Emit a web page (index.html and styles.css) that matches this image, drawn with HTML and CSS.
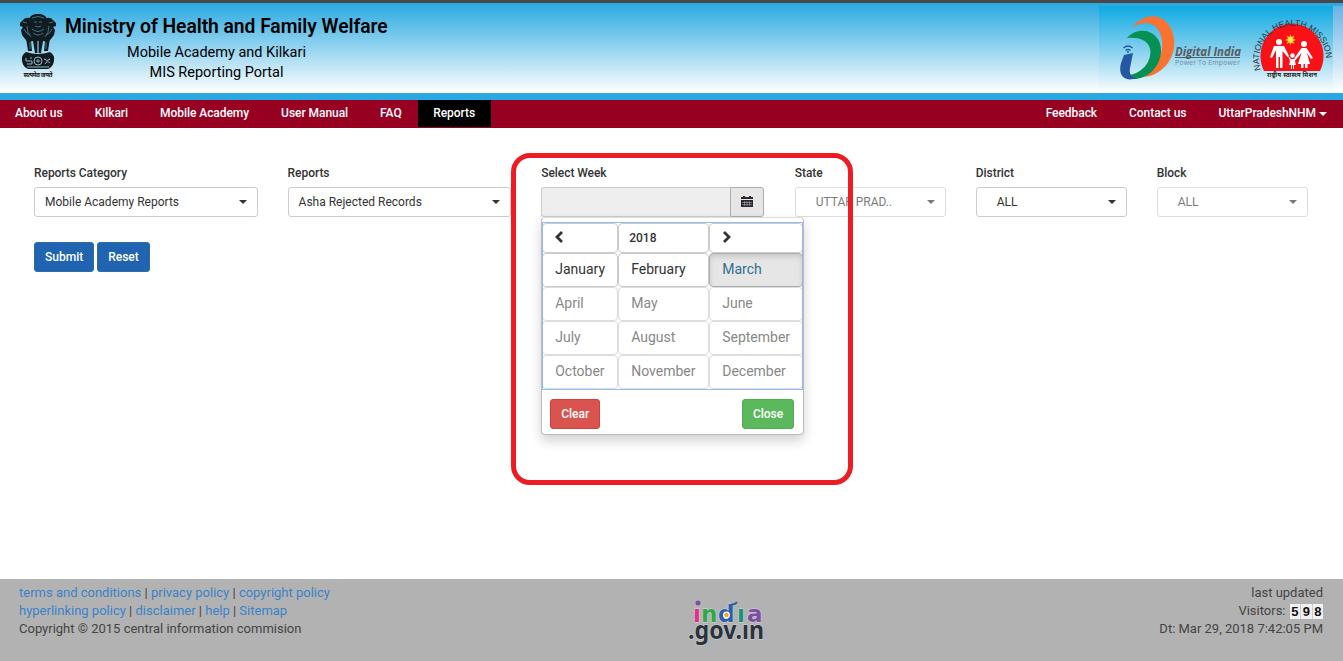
FILE: index.html
```html
<!DOCTYPE html>
<html lang="en">
<head>
<meta charset="utf-8">
<title>MIS Reporting Portal</title>
<link rel="stylesheet" href="styles.css">
</head>
<body>
<header class="header">
  <svg class="emblem" viewBox="0 0 40 66" width="40" height="66">
    <g fill="#101c20">
      <path d="M12 4Q15 .5 20 1Q25 .5 28 4L29 8L27 18L25 26H15L12 18L11 8Z"/>
      <path d="M12 5Q7 4 5 7L2 10L2 13L5 14L3 17L4 22L7 26L10 29L15 28V12Z"/>
      <path d="M28 5Q33 4 35 7L38 10L38 13L35 14L37 17L36 22L33 26L30 29L25 28V12Z"/>
      <path d="M8 25L10 38H14L13 28H15L17 40H19.4V28H20.6V40H23L25 28H27L26 38H30L32 25Z"/>
      <path d="M8 39Q20 43 32 39Q37 42 36 48Q35 54 30 56H10Q5 54 4 48Q3 42 8 39Z"/>
    </g>
    <g fill="none" stroke="#4d88a0" stroke-width=".8">
      <path d="M14 5q6 -3 12 0M16 9h3M21 9h3M17 13q3 2 6 0M14 16q6 5 12 0M15 20q5 4 10 0M5 9l4 1M35 9l-4 1M6 16q2 5 6 6M34 16q-2 5 -6 6M9 13q0 7 4 11M31 13q0 7 -4 11M12 29v7M28 29v7"/>
    </g>
    <g fill="none" stroke="#91b6c5" stroke-width="1">
      <circle cx="20" cy="48" r="4"/><circle cx="20" cy="48" r="1.200"/>
      <path d="M8 45v3h6v3H9M12 45h2M26 46q3 3 6 0M27 51q2-4 5-1M9 54h22"/>
    </g>
    <text x="20" y="64" class="emblem-motto" textLength="29">सत्यमेव जयते</text>
  </svg>
  <div class="titles">
    <h1 class="title">Ministry of Health and Family Welfare</h1>
    <p class="subtitle">Mobile Academy and Kilkari</p>
    <p class="subtitle">MIS Reporting Portal</p>
  </div>
  <svg class="partners" viewBox="0 0 244 87" width="244" height="87">
    <defs>
      <linearGradient id="sky" x2="0" y2="1"><stop stop-color="#0eaae2"/><stop offset=".5" stop-color="#83d0ee"/><stop offset="1" stop-color="#fdfeff"/></linearGradient>
      <linearGradient id="side" x2="0" y2="1"><stop stop-color="#6ab2e5"/><stop offset="1" stop-color="#fff"/></linearGradient>
      <path id="arc" d="M161.800 64A33.500 33.500 0 1 1 225.200 64"/>
    </defs>
    <rect width="244" height="87" fill="url(#side)"/>
    <rect width="234" height="87" fill="url(#sky)"/>
    <path d="M33 22C46 5 66 7 73 25C82 49 63 70 45 71C61 61 68 40 60 25C54 15 44 15 33 22Z" fill="#fb7132"/>
    <path d="M28 32C37 22 53 22 60 35C68 53 52 74 34 73C29 73 26 71 24 67C32 72 44 65 49 56C55 44 51 30 28 32Z" fill="#079054"/>
    <path d="M25 49L34 47L31 62C30 68 32 71 38 72C24 77 19 68 22 57Z" fill="#2458a4"/>
    <g fill="none" stroke="#2458a4" stroke-width="1.300"><path d="M24.500 42q4.500-4 9 0M26.500 44.500q2.500-2 5 0"/></g>
    <circle cx="29" cy="46" r="1" fill="#2458a4"/>
    <text x="76" y="50" class="digital" textLength="66">Digital India</text>
    <path d="M76 51.500H141" stroke="#555b60" stroke-width="1"/>
    <text x="76" y="58.500" class="power" textLength="65">Power To Empower</text>
    <path d="M165 65A31.500 32.500 0 1 1 221 65Z" fill="#fa1017"/>
    <text class="mission"><textPath href="#arc">NATIONAL HEALTH MISSION</textPath></text>
    <path d="M191.500 28l1 3 3-1.500-1.500 3 3 1.500-3 1 1.500 3-3-1.500-1 3-1-3-3 1.500 1.500-3-3-1 3-1.500-1.500-3 3 1.500Z" fill="#ffc428"/>
    <circle cx="191.500" cy="34" r="2.700" fill="#ffe943"/>
    <g fill="#fff" transform="translate(-1 0)">
      <circle cx="181" cy="36" r="3"/><circle cx="206" cy="38" r="3"/><circle cx="194.500" cy="49.500" r="2.300"/>
      <path d="M176 40H186L191 50L189.500 51L184.500 45V62H182V51H180.500V62H178V44L174 52L172 51Z"/>
      <path d="M203.500 42H208.500L215 52L213 53L209 47L212 58H209.500V62H207V58H205.500V62H203V58H200L203.500 47L197.500 54L196.500 52Z"/>
      <path d="M189.500 49L193 53H196L199 50L197 55L198 59H196V63H195V59H194V63H193V59H191L192 55Z"/>
    </g>
    <text x="193" y="71" class="hindi" textLength="50">राष्ट्रीय स्वास्थ्य मिशन</text>
  </svg>
</header>

<nav class="nav">
  <a class="nav-item">About us</a><a class="nav-item">Kilkari</a><a class="nav-item">Mobile Academy</a><a class="nav-item">User Manual</a><a class="nav-item">FAQ</a><a class="nav-item active">Reports</a>
  <span class="spacer"></span>
  <a class="nav-item">Feedback</a><a class="nav-item">Contact us</a><a class="nav-item user">UttarPradeshNHM<i class="caret"></i></a>
</nav>

<main class="main">
  <div class="filters">
    <div class="field"><label class="label">Reports Category</label><div class="select">Mobile Academy Reports<i class="caret"></i></div></div>
    <div class="field"><label class="label">Reports</label><div class="select">Asha Rejected Records<i class="caret"></i></div></div>
    <div class="field week">
      <label class="label">Select Week</label>
      <div class="date"><span class="date-input"></span><span class="date-button">
        <svg width="12" height="12" viewBox="0 0 12 12"><path d="M0 1h2V0h2v1h4V0h2v1h2v2H0ZM0 4h12v7H0Z" fill="#2b2530"/><path d="M1 6.500h10M1 8.700h10M3.500 5v5M6 5v5M8.500 5v5" stroke="#e6e6e6" stroke-width=".4"/></svg>
      </span></div>
      <div class="popup">
        <div class="months">
          <span class="cell head"><svg width="10" height="12" viewBox="0 0 10 12"><path d="M8 1L3 6L8 11" fill="none" stroke="#333" stroke-width="2.800"/></svg></span>
          <span class="cell head year">2018</span>
          <span class="cell head"><svg width="10" height="12" viewBox="0 0 10 12"><path d="M3 1L8 6L3 11" fill="none" stroke="#333" stroke-width="2.800"/></svg></span>
          <span class="cell">January</span><span class="cell">February</span><span class="cell current">March</span>
          <span class="cell off">April</span><span class="cell off">May</span><span class="cell off">June</span>
          <span class="cell off">July</span><span class="cell off">August</span><span class="cell off">September</span>
          <span class="cell off">October</span><span class="cell off">November</span><span class="cell off">December</span>
        </div>
        <div class="popup-actions"><button class="btn danger">Clear</button><button class="btn success">Close</button></div>
      </div>
    </div>
    <div class="field"><label class="label">State</label><div class="select indent disabled">UTTAR PRAD..<i class="caret"></i></div></div>
    <div class="field"><label class="label">District</label><div class="select indent">ALL<i class="caret"></i></div></div>
    <div class="field"><label class="label">Block</label><div class="select indent disabled">ALL<i class="caret"></i></div></div>
  </div>
  <div class="actions"><button class="btn primary">Submit</button><button class="btn primary">Reset</button></div>
</main>
<div class="highlight"></div>

<footer class="footer">
  <div class="footer-links">
    <div><a>terms and conditions</a> | <a>privacy policy</a> | <a>copyright policy</a></div>
    <div><a>hyperlinking policy</a> | <a>disclaimer</a> | <a>help</a> | <a>Sitemap</a></div>
    <div>Copyright © 2015 central information commision</div>
  </div>
  <svg class="india" viewBox="0 0 80 50" width="80" height="50">
    <text y="22.500" class="india-word"><tspan x="7" fill="#e0308c">ı</tspan><tspan x="15" fill="#2fa84a">n</tspan><tspan x="32" fill="#2b5fae">d</tspan><tspan x="51" fill="#16937a">ı</tspan><tspan x="61" fill="#7d4fa2">a</tspan></text>
    <text x="2" y="40" class="gov-word" textLength="76" lengthAdjust="spacingAndGlyphs">.gov.ın</text>
    <circle cx="12" cy="4" r="2.500" fill="#7d4fa2"/>
    <path d="M45 5.500Q49 6 51 3" fill="none" stroke="#2b5fae" stroke-width="2"/>
    <circle cx="40.500" cy="16" r="3.400" fill="#fff"/><circle cx="40.500" cy="16" r="2.200" fill="#f9a21b"/>
  </svg>
  <div class="footer-info">
    <div>last updated</div>
    <div class="visitors">Visitors: <span class="digits"><b>5</b><b>9</b><b>8</b></span></div>
    <div>Dt: Mar 29, 2018 7:42:05 PM</div>
  </div>
</footer>
</body>
</html>
```
FILE: styles.css
```css
* { box-sizing: border-box; }
body { margin: 0; height: 661px; display: flex; flex-direction: column; overflow: hidden; position: relative; background: #fff; color: #333; font: 12px/18px Roboto, sans-serif; }
.header { height: 100px; flex: none; display: flex; border-top: 3px solid #484848; border-bottom: 7px solid #29a9e1; background: linear-gradient(#29a9e1, #fff); }
.emblem { margin: 10px 0 0 18px; }
.emblem-motto { font: bold 6px "Noto Sans Devanagari", "Noto Sans", sans-serif; text-anchor: middle; fill: #111; }
.titles { margin: 12px 0 0 7px; width: 323px; color: #000; }
.title { margin: 0; font-size: 19.3px; font-weight: 600; line-height: 24px; letter-spacing: -.05px; white-space: nowrap; }
.subtitle { margin: 0 20px 0 0; font-size: 14.5px; line-height: 20px; text-align: center; }
.title + .subtitle { margin-top: 4px; }
.partners { margin: 3px 0 0 auto; }
.digital { font: italic bold 11.5px "Open Sans", sans-serif; fill: #555b60; }
.power { font: 7px "Open Sans", sans-serif; fill: #7c8c96; }
.mission { font: 8.6px "Liberation Sans", sans-serif; letter-spacing: -.05px; fill: #26343b; }
.hindi { font: bold 6px "Noto Sans Devanagari", "Noto Sans", sans-serif; text-anchor: middle; fill: #222; }
.nav { height: 28px; flex: none; display: flex; background: #980022; color: #fff; }
.nav-item { padding: 0 16px; line-height: 26px; font-weight: 500; letter-spacing: -.05px; white-space: nowrap; }
.nav-item:first-child { padding-left: 15px; }
.nav-item.active { background: #000; padding: 0 15.5px; height: 27px; }
.spacer { flex: 1; }
.caret { display: inline-block; border: 4px solid transparent; border-top-color: currentColor; border-bottom: 0; }
.user .caret { margin-left: 3px; vertical-align: middle; }
.main { flex: 1; padding: 36px 34px 0; }
.filters { display: grid; grid-template-columns: repeat(3, 223.6px) repeat(3, 151px); gap: 30px; }
.label { display: block; height: 23px; font-weight: 500; letter-spacing: -.05px; }
.select { height: 30px; border: 1px solid #ccc; border-radius: 3px; padding: 0 10px; display: flex; align-items: center; justify-content: space-between; white-space: nowrap; }
.select.indent { padding-left: 20px; }
.select.disabled { opacity: .65; }
.week { position: relative; }
.date { display: flex; height: 30px; }
.date-input { width: 189px; background: #eee; border: 1px solid #ccc; border-right: 0; border-radius: 3px 0 0 3px; }
.date-button { width: 34px; display: flex; align-items: center; justify-content: center; background: #e6e6e6; border: 1px solid #adadad; border-radius: 0 3px 3px 0; }
.popup { position: absolute; top: 53px; left: 0; width: 263px; height: 218px; padding-top: 4px; background: #fff; border: 1px solid #bbb; border-top-color: #ddd; border-radius: 4px; box-shadow: 0 6px 12px rgba(0, 0, 0, .175); z-index: 1; }
.months { display: grid; grid-template-columns: 76px 91px 94px; grid-template-rows: 30px repeat(4, 34px); padding-top: 1px; outline: 1px solid #94b9f6; outline-offset: -1px; border-bottom: 1px solid #94b9f6; }
.cell { border: 1px solid #ccc; border-radius: 4px; padding: 0 12px; font-size: 14px; line-height: 31px; }
.cell.head { padding: 0 11px; font-size: 12px; line-height: 29px; }
.cell.head svg { vertical-align: middle; margin-top: -3px; }
.cell.year { padding-left: 10px; font-weight: 500; }
.cell.off { border-color: #ddd; color: #888; }
.cell.current { background: #e6e6e6; border-color: #adadad; color: #31708f; box-shadow: inset 0 3px 5px rgba(0, 0, 0, .125); }
.popup-actions { display: flex; justify-content: space-between; padding: 9px 9px 0 8px; }
.btn { height: 30px; padding: 0 10px; border: 1px solid; border-radius: 3px; color: #fff; font: 500 12px/18px Roboto, sans-serif; }
.primary { background: #2063b0; border-color: #2e6da4; }
.danger { background: #d9534f; border-color: #d43f3a; }
.success { background: #5cb85c; border-color: #4cae4c; }
.actions { display: flex; gap: 3px; margin-top: 25px; }
.highlight { position: absolute; left: 511px; top: 153px; width: 342px; height: 332px; border: 5px solid #ed1c24; border-radius: 19px; z-index: 2; }
.footer { height: 82px; flex: none; display: flex; background: #b2b2b2; padding: 5px 20px 0 19px; font-size: 13px; color: #444; }
.footer-links { width: 667px; }
.footer a { color: #3a83ca; }
.india { margin-top: 15px; }
.india-word { font: bold 23px "DejaVu Sans", sans-serif; stroke: #d5d5d5; stroke-width: 1px; paint-order: stroke; }
.gov-word { font: bold 25px "Noto Sans", sans-serif; fill: #29333f; stroke: #d5d5d5; stroke-width: 1px; paint-order: stroke; }
.footer-info { margin-left: auto; text-align: right; }
.visitors { display: flex; justify-content: flex-end; align-items: center; gap: 4px; height: 18px; }
.digits { display: flex; gap: 1px; background: #ccc; }
.digits b { width: 10.5px; height: 15px; background: #f1f1f1; color: #111; font: bold 13px/15px "Liberation Sans", sans-serif; text-align: center; }
```
